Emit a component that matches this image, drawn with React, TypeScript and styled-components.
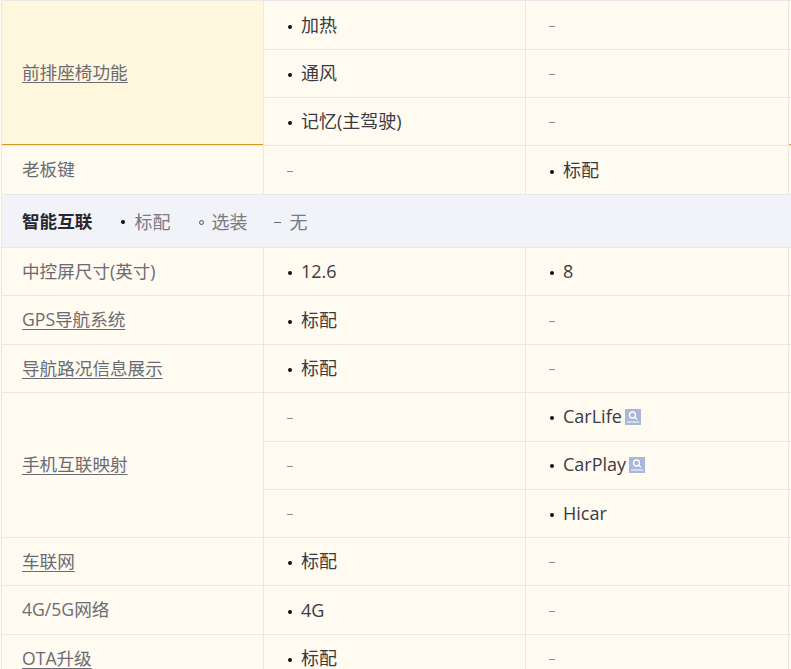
import React from "react";
import styled, { createGlobalStyle } from "styled-components";

const Global = createGlobalStyle`
  html, body { margin: 0; padding: 0; background: #fffbf0; overflow: hidden; height: 669px; }
  body { font-family: "Open Sans", "Noto Sans CJK SC", sans-serif; }
`;

const Page = styled.div`
  width: 791px;
  height: 669px;
  overflow: hidden;
  padding-left: 1px;
  box-sizing: border-box;
`;

const Table = styled.table`
  width: 1050px;
  table-layout: fixed;
  border-collapse: collapse;
  border-top: 1px solid #e8e8e8;
  border-left: 1px solid #e8e8e8;
`;

const Row = styled.tr<{ $tall?: boolean }>`
  height: ${(p) => (p.$tall ? 49 : 48)}px;
`;

const LabelCell = styled.td<{ $hi?: boolean }>`
  box-sizing: border-box;
  padding: 0 0 2px 20px;
  border: 1px solid #e8e8e8;
  border-top: 0;
  font-size: 17.6px;
  line-height: 24px;
  color: #6b6b74;
  background: ${(p) => (p.$hi ? "#fff6de" : "transparent")};
  ${(p) => (p.$hi ? "box-shadow: inset 0 -1px 0 #d29a2c;" : "")}
`;

const ValueCell = styled.td<{ $lift?: boolean }>`
  box-sizing: border-box;
  padding: 0 0 ${(p) => (p.$lift ? 3 : 1)}px 24px;
  border: 1px solid #e8e8e8;
  border-top: 0;
  font-size: 18px;
  line-height: 24px;
  color: #3a3a42;
`;

const Link = styled.span`
  text-decoration: underline;
  text-underline-offset: 3px;
  text-decoration-thickness: 1px;
`;

const Dot = styled.i`
  display: inline-block;
  width: 4px;
  height: 4px;
  border-radius: 50%;
  background: #111;
  margin-right: 9px;
  vertical-align: 3px;
`;

const Dash = styled.span`
  display: inline-block;
  width: 6px;
  height: 1px;
  background: #8c8c92;
  margin-left: -1px;
  vertical-align: 5px;
`;

const SectionCell = styled.td`
  box-sizing: border-box;
  height: 53px;
  padding: 0 0 1px 20px;
  background: #f2f3f9;
  border: 1px solid #e8e8e8;
  border-top: 0;
`;

const SectionInner = styled.div`
  display: flex;
  align-items: center;
  color: #7a7a82;
`;

const SectionTitle = styled.b`
  color: #26262e;
  font-size: 17.6px;
  margin-right: 29px;
`;

const Legend = styled.span`
  display: inline-flex;
  align-items: center;
  margin-right: 27px;
  font-size: 18px;
`;

const Ring = styled.i`
  display: inline-block;
  width: 5px;
  height: 5px;
  box-sizing: border-box;
  border: 1px solid #555;
  border-radius: 50%;
  margin: 3px 7px 0 2px;
`;

const LegendDot = styled(Dot)`
  margin: 3px 9px 0 0;
  vertical-align: 0;
`;

const LegendDash = styled.i`
  display: inline-block;
  width: 7px;
  height: 1px;
  background: #666;
  margin: 3px 8px 0 0;
`;

const Guide = styled.svg`
  display: inline-block;
  width: 16px;
  height: 16px;
  margin: -3px 0 -3px 3px;
  vertical-align: 1px;
`;

const GuideIcon = () => (
  <Guide viewBox="0 0 16 16">
    <rect width="16" height="16" fill="#a9b8d8" />
    <circle cx="7.5" cy="6" r="3" fill="none" stroke="#fff" strokeWidth="1.3" />
    <path d="M9.8 8.2 12 10.2M2 13h12" stroke="#fff" strokeWidth="1.2" fill="none" />
  </Guide>
);

const Val = ({ t, guide }: { t: string; guide?: boolean }) =>
  t === "-" ? (
    <Dash />
  ) : (
    <>
      <Dot />
      {t}
      {guide && <GuideIcon />}
    </>
  );

const Extra = styled.td`
  border: 1px solid #e8e8e8;
  border-top: 0;
`;

const ExtraHi = styled(Extra)`
  box-shadow: inset 0 -1px 0 #d29a2c;
`;

export default function App() {
  return (
    <Page>
      <Global />
      <Table>
        <colgroup>
          <col width="262" />
          <col width="262" />
          <col width="263" />
          <col width="262" />
        </colgroup>
        <tbody>
          <Row $tall>
            <LabelCell $hi rowSpan={3}><Link>前排座椅功能</Link></LabelCell>
            <ValueCell><Val t="加热" /></ValueCell>
            <ValueCell><Val t="-" /></ValueCell>
            <Extra />
          </Row>
          <Row>
            <ValueCell><Val t="通风" /></ValueCell>
            <ValueCell><Val t="-" /></ValueCell>
            <Extra />
          </Row>
          <Row>
            <ValueCell><Val t="记忆(主驾驶)" /></ValueCell>
            <ValueCell><Val t="-" /></ValueCell>
            <ExtraHi />
          </Row>
          <Row $tall>
            <LabelCell>老板键</LabelCell>
            <ValueCell><Val t="-" /></ValueCell>
            <ValueCell><Val t="标配" /></ValueCell>
            <Extra />
          </Row>
          <tr>
            <SectionCell colSpan={4}>
              <SectionInner>
                <SectionTitle>智能互联</SectionTitle>
                <Legend><LegendDot />标配</Legend>
                <Legend><Ring />选装</Legend>
                <Legend><LegendDash />无</Legend>
              </SectionInner>
            </SectionCell>
          </tr>
          <Row>
            <LabelCell>中控屏尺寸(英寸)</LabelCell>
            <ValueCell><Val t="12.6" /></ValueCell>
            <ValueCell><Val t="8" /></ValueCell>
            <Extra />
          </Row>
          <Row $tall>
            <LabelCell><Link>GPS导航系统</Link></LabelCell>
            <ValueCell><Val t="标配" /></ValueCell>
            <ValueCell><Val t="-" /></ValueCell>
            <Extra />
          </Row>
          <Row>
            <LabelCell><Link>导航路况信息展示</Link></LabelCell>
            <ValueCell><Val t="标配" /></ValueCell>
            <ValueCell><Val t="-" /></ValueCell>
            <Extra />
          </Row>
          <Row $tall>
            <LabelCell rowSpan={3}><Link>手机互联映射</Link></LabelCell>
            <ValueCell><Val t="-" /></ValueCell>
            <ValueCell $lift><Val t="CarLife" guide /></ValueCell>
            <Extra />
          </Row>
          <Row>
            <ValueCell><Val t="-" /></ValueCell>
            <ValueCell $lift><Val t="CarPlay" guide /></ValueCell>
            <Extra />
          </Row>
          <Row>
            <ValueCell><Val t="-" /></ValueCell>
            <ValueCell><Val t="Hicar" /></ValueCell>
            <Extra />
          </Row>
          <Row>
            <LabelCell><Link>车联网</Link></LabelCell>
            <ValueCell><Val t="标配" /></ValueCell>
            <ValueCell><Val t="-" /></ValueCell>
            <Extra />
          </Row>
          <Row $tall>
            <LabelCell>4G/5G网络</LabelCell>
            <ValueCell><Val t="4G" /></ValueCell>
            <ValueCell><Val t="-" /></ValueCell>
            <Extra />
          </Row>
          <Row>
            <LabelCell><Link>OTA升级</Link></LabelCell>
            <ValueCell><Val t="标配" /></ValueCell>
            <ValueCell><Val t="-" /></ValueCell>
            <Extra />
          </Row>
        </tbody>
      </Table>
    </Page>
  );
}
